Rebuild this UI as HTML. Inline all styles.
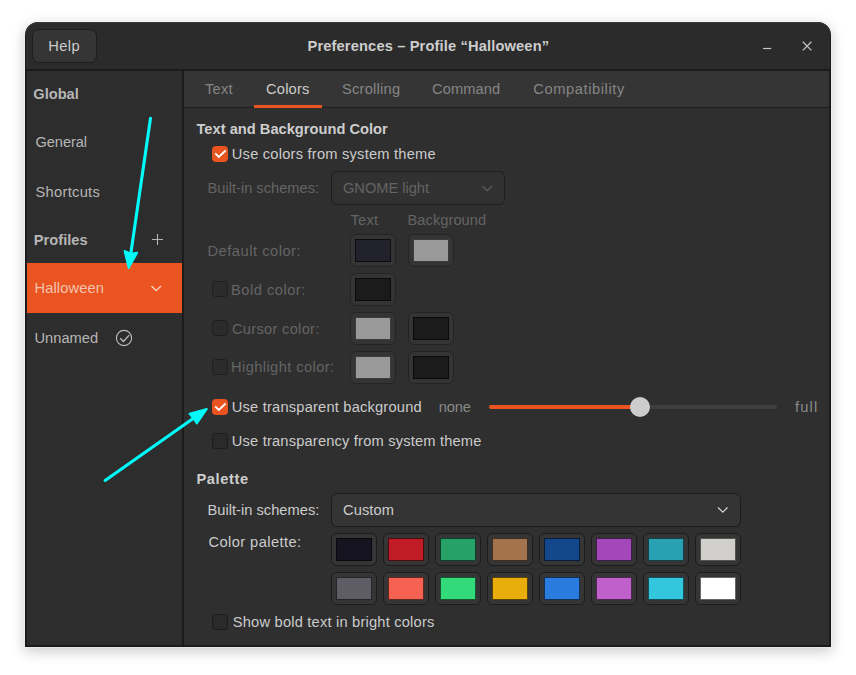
<!DOCTYPE html>
<html lang="en">
<head>
<meta charset="utf-8">
<title>Preferences – Profile “Halloween”</title>
<style>
html,body{margin:0;padding:0;background:#fff;}
body{width:856px;height:675px;overflow:hidden;position:relative;font-family:"Liberation Sans",sans-serif;font-size:14.67px;}
#win{position:absolute;left:0;top:0;width:856px;height:675px;}
#win div{position:absolute;box-sizing:border-box;}
.t{position:absolute;white-space:pre;line-height:20px;height:20px;font-size:14.67px;}
.b{font-weight:bold;}
#frame{left:25px;top:22px;width:806px;height:625px;border-radius:13px 13px 0 0;background:#1b1b1b;box-shadow:0 0 0 1px rgba(245,245,245,.45),0 4px 14px 1px rgba(0,0,0,.2);overflow:hidden;}
#titlebar{left:1px;top:0;width:804px;height:47px;background:#2b2b2b;border-radius:12px 12px 0 0;box-shadow:inset 0 1px 0 rgba(255,255,255,.08);}
#sidebar{left:2px;top:49px;width:155px;height:574px;background:#2d2d2d;}
#tabbar{left:159px;top:49px;width:645px;height:36px;background:#353535;}
#tabline{left:159px;top:85px;width:645px;height:1px;background:#1f1f1f;}
#content{left:159px;top:86px;width:645px;height:537px;background:#2f2f2f;}
#help{left:32px;top:29px;width:65px;height:34px;border-radius:7px;background:#353535;border:1px solid #1d1d1d;}
#sel{left:27px;top:263px;width:155px;height:50px;background:#e95420;}
#tabsel{left:254px;top:105px;width:68px;height:3px;background:#e95420;}
.combo{border-radius:6px;background:#343434;border:1px solid #1c1c1c;}
.cbtn{width:46px;height:33px;border-radius:6px;background:#353535;border:1px solid #1c1c1c;}
.cbtn i{position:absolute;left:4px;top:4px;width:36px;height:23px;box-sizing:border-box;border:1px solid rgba(0,0,0,.6);display:block;}
.cbtn.dis{background:#343434;border-color:#242424;}
.chk{width:16px;height:16px;border-radius:3.5px;background:#2a2a2a;border:1px solid #1b1b1b;}
.chk.dis{background:#2b2b2b;border-color:#1e1e1e;}
.chk.on{background:#e95420;border-color:#e95420;}
#track{left:489px;top:405px;width:288px;height:4px;border-radius:2px;background:#3e3e3e;}
#fill{left:489px;top:405px;width:151px;height:4px;border-radius:2px;background:#e95420;}
#knob{left:630px;top:397px;width:20px;height:20px;border-radius:10px;background:#cdcdcd;}
svg{position:absolute;left:0;top:0;}

</style>
</head>
<body>
<div id="win">
<div id="frame">
  <div id="titlebar"></div>
  <div id="sidebar"></div>
  <div id="tabbar"></div>
  <div id="tabline"></div>
  <div id="content"></div>
</div>
<div id="help"></div>
<div id="sel"></div>
<div id="tabsel"></div>

<div class="chk on" style="left:212px;top:146px"></div>
<div class="combo" style="left:331px;top:171px;width:174px;height:34px;background:#313131;border-color:#1f1f1f"></div>

<div class="cbtn dis" style="left:350px;top:234px"><i style="background:#22222c"></i></div>
<div class="cbtn dis" style="left:408px;top:234px"><i style="background:#999999"></i></div>
<div class="chk dis" style="left:212px;top:281px"></div>
<div class="cbtn dis" style="left:350px;top:273px"><i style="background:#1b1b1b"></i></div>
<div class="chk dis" style="left:212px;top:320px"></div>
<div class="cbtn dis" style="left:350px;top:312px"><i style="background:#999999"></i></div>
<div class="cbtn dis" style="left:408px;top:312px"><i style="background:#1b1b1b"></i></div>
<div class="chk dis" style="left:212px;top:359px"></div>
<div class="cbtn dis" style="left:350px;top:351px"><i style="background:#999999"></i></div>
<div class="cbtn dis" style="left:408px;top:351px"><i style="background:#1b1b1b"></i></div>

<div class="chk on" style="left:212px;top:399px"></div>
<div id="track"></div><div id="fill"></div><div id="knob"></div>
<div class="chk" style="left:212px;top:433px"></div>

<div class="combo" style="left:331px;top:493px;width:410px;height:34px"></div>
<div class="cbtn" style="left:331px;top:533px"><i style="background:#171421"></i></div>
<div class="cbtn" style="left:383px;top:533px"><i style="background:#c01c28"></i></div>
<div class="cbtn" style="left:435px;top:533px"><i style="background:#26a269"></i></div>
<div class="cbtn" style="left:487px;top:533px"><i style="background:#a2734c"></i></div>
<div class="cbtn" style="left:539px;top:533px"><i style="background:#12488b"></i></div>
<div class="cbtn" style="left:591px;top:533px"><i style="background:#a347ba"></i></div>
<div class="cbtn" style="left:643px;top:533px"><i style="background:#2aa1b3"></i></div>
<div class="cbtn" style="left:695px;top:533px"><i style="background:#d0cfcc"></i></div>
<div class="cbtn" style="left:331px;top:572px"><i style="background:#5e5c64"></i></div>
<div class="cbtn" style="left:383px;top:572px"><i style="background:#f66151"></i></div>
<div class="cbtn" style="left:435px;top:572px"><i style="background:#33da7a"></i></div>
<div class="cbtn" style="left:487px;top:572px"><i style="background:#e9ad0c"></i></div>
<div class="cbtn" style="left:539px;top:572px"><i style="background:#2a7bde"></i></div>
<div class="cbtn" style="left:591px;top:572px"><i style="background:#c061cb"></i></div>
<div class="cbtn" style="left:643px;top:572px"><i style="background:#33c7de"></i></div>
<div class="cbtn" style="left:695px;top:572px"><i style="background:#ffffff"></i></div>
<div class="chk" style="left:212px;top:614px"></div>

<span class="t" style="left:48.25px;top:36.42px;letter-spacing:0.419px;color:#cbcbcb">Help</span>
<span class="t b" style="left:307.50px;top:35.92px;letter-spacing:0.142px;color:#cdcdcd">Preferences – Profile “Halloween”</span>
<span class="t b" style="left:33.25px;top:83.67px;letter-spacing:-0.006px;color:#b6b6b6">Global</span>
<span class="t" style="left:35.50px;top:131.92px;letter-spacing:-0.106px;color:#b6b6b6">General</span>
<span class="t" style="left:35.50px;top:181.92px;letter-spacing:0.302px;color:#b6b6b6">Shortcuts</span>
<span class="t b" style="left:33.75px;top:229.92px;letter-spacing:0.020px;color:#b6b6b6">Profiles</span>
<span class="t" style="left:34.50px;top:277.92px;letter-spacing:0.121px;color:#f3c3ae">Halloween</span>
<span class="t" style="left:34.50px;top:327.92px;letter-spacing:0.017px;color:#b6b6b6">Unnamed</span>
<span class="t" style="left:205.00px;top:78.67px;letter-spacing:0.231px;color:#858585">Text</span>
<span class="t" style="left:266.00px;top:78.67px;letter-spacing:0.195px;color:#cbcbcb">Colors</span>
<span class="t" style="left:342.00px;top:78.67px;letter-spacing:0.243px;color:#858585">Scrolling</span>
<span class="t" style="left:432.00px;top:78.67px;letter-spacing:0.091px;color:#858585">Command</span>
<span class="t" style="left:533.25px;top:78.67px;letter-spacing:0.599px;color:#858585">Compatibility</span>
<span class="t b" style="left:196.50px;top:118.92px;letter-spacing:0.005px;color:#cdcdcd">Text and Background Color</span>
<span class="t" style="left:231.80px;top:143.92px;letter-spacing:0.220px;color:#cbcbcb">Use colors from system theme</span>
<span class="t" style="left:207.50px;top:177.92px;letter-spacing:-0.001px;color:#646464">Built-in schemes:</span>
<span class="t" style="left:343.00px;top:177.92px;letter-spacing:-0.026px;color:#646464">GNOME light</span>
<span class="t" style="left:350.50px;top:209.92px;letter-spacing:0.231px;color:#646464">Text</span>
<span class="t" style="left:407.50px;top:209.92px;letter-spacing:0.048px;color:#646464">Background</span>
<span class="t" style="left:207.50px;top:240.67px;letter-spacing:0.517px;color:#646464">Default color:</span>
<span class="t" style="left:231.00px;top:279.92px;letter-spacing:0.508px;color:#646464">Bold color:</span>
<span class="t" style="left:232.00px;top:318.67px;letter-spacing:0.286px;color:#646464">Cursor color:</span>
<span class="t" style="left:231.00px;top:357.42px;letter-spacing:0.409px;color:#646464">Highlight color:</span>
<span class="t" style="left:231.80px;top:396.92px;letter-spacing:0.196px;color:#cbcbcb">Use transparent background</span>
<span class="t" style="left:438.75px;top:396.92px;letter-spacing:-0.151px;color:#8a8a8a">none</span>
<span class="t" style="left:795.00px;top:396.92px;letter-spacing:1.174px;color:#8a8a8a">full</span>
<span class="t" style="left:231.80px;top:430.92px;letter-spacing:0.184px;color:#cbcbcb">Use transparency from system theme</span>
<span class="t b" style="left:196.50px;top:468.92px;letter-spacing:0.598px;color:#cdcdcd">Palette</span>
<span class="t" style="left:207.50px;top:499.92px;letter-spacing:0.015px;color:#cbcbcb">Built-in schemes:</span>
<span class="t" style="left:343.00px;top:499.92px;letter-spacing:0.093px;color:#cbcbcb">Custom</span>
<span class="t" style="left:208.50px;top:531.92px;letter-spacing:0.415px;color:#cbcbcb">Color palette:</span>
<span class="t" style="left:232.80px;top:611.92px;letter-spacing:0.200px;color:#cbcbcb">Show bold text in bright colors</span>
</div>
<svg width="856" height="675" viewBox="0 0 856 675" fill="none">
  <!-- window controls -->
  <path d="M763 48.5H771.2" stroke="#c4c4c4" stroke-width="1.2"/>
  <path d="M802.8 41.8L811.4 50.4M811.4 41.8L802.8 50.4" stroke="#c4c4c4" stroke-width="1.25"/>
  <!-- plus -->
  <path d="M152 239.5H163M157.5 234V245" stroke="#b4b4b4" stroke-width="1.1"/>
  <!-- chevrons -->
  <path d="M151.5 286L156.2 290.6L161 286" stroke="#f7d9cd" stroke-width="1.3"/>
  <path d="M482.5 186L487.2 190.6L492 186" stroke="#5e5e5e" stroke-width="1.3"/>
  <path d="M718 507.5L722.8 512.2L727.5 507.5" stroke="#d0d0d0" stroke-width="1.3"/>
  <!-- circle check -->
  <circle cx="124" cy="338" r="7.6" stroke="#c0c0c0" stroke-width="1.1"/>
  <path d="M120.3 338.3L123.4 341.5L129.2 335.1" stroke="#c0c0c0" stroke-width="1.3"/>
  <!-- checkbox ticks -->
  <path d="M215.2 153.3L218.8 157L225.6 150.5" stroke="#fff" stroke-width="1.8"/>
  <path d="M215.2 406.3L218.8 410L225.6 403.5" stroke="#fff" stroke-width="1.8"/>
  <!-- annotation arrows -->
  <g stroke="#00fbfb" fill="#00fbfb">
    <path d="M150.5 118.2L130.9 253" stroke-width="3.1" stroke-linecap="round"/>
    <path d="M128.65 268.1L124.5 250.9L130.9 253.7L137.2 252.8Z" stroke-width="1.9" stroke-linejoin="round"/>
    <path d="M105.1 480.4L193.5 418.3" stroke-width="3.1" stroke-linecap="round"/>
    <path d="M206.9 409L189.5 413.6L193.4 418.5L196.8 423.5Z" stroke-width="1.9" stroke-linejoin="round"/>
  </g>
</svg>

</body>
</html>
